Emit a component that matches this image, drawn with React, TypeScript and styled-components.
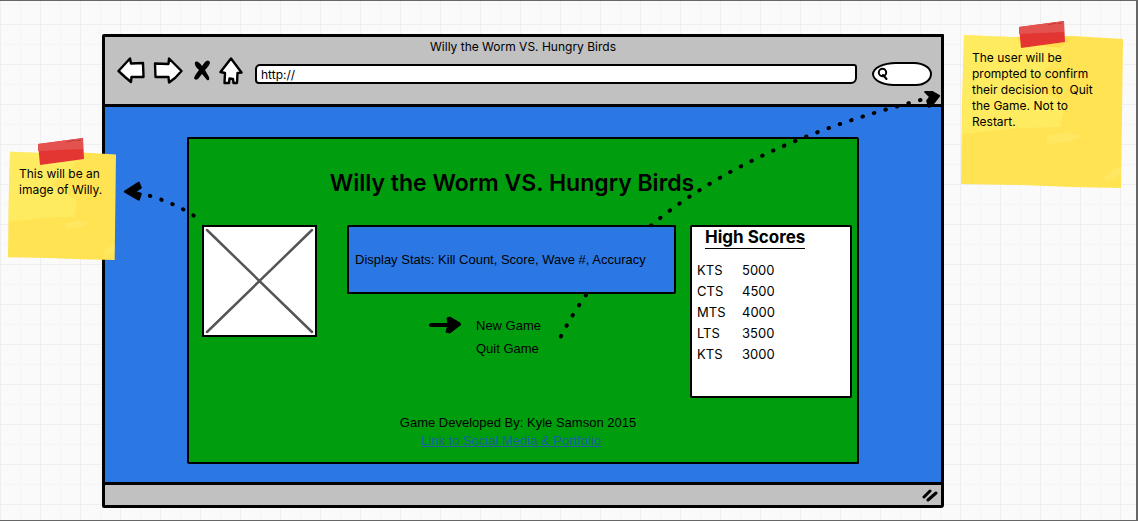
import React from "react";
import styled, { createGlobalStyle } from "styled-components";

const INK = "#000";
const BLUE = "#2b78e4";
const GREEN = "#009e0f";
const GREY = "#c1c1c1";

const GlobalStyle = createGlobalStyle`
  *, *::before, *::after { box-sizing: border-box; }
  body {
    margin: 0;
    color: ${INK};
    font-family: Inter, "Liberation Sans", sans-serif;
    font-size: 12px;
    line-height: 16px;
  }
  button, input { font: inherit; color: inherit; }
`;

const Canvas = styled.main`
  display: grid;
  grid-template-columns: 102px minmax(0, 1fr) 192px;
  align-items: start;
  min-height: 100vh;
  padding: 33px 0 12px;
  border: solid #666;
  border-width: 1px 2px 1px 0;
  background-color: #fafafa;
  background-image:
    linear-gradient(to right, #efefef 1px, transparent 1px),
    linear-gradient(to bottom, #efefef 1px, transparent 1px),
    linear-gradient(to right, #f5f5f5 1px, transparent 1px),
    linear-gradient(to bottom, #f5f5f5 1px, transparent 1px);
  background-size: 40px 40px, 40px 40px, 20px 20px, 20px 20px;
  background-position: 0 23px;
`;

const Note = styled.aside<{ $side: "left" | "right" }>`
  position: relative;
  z-index: 2;
  width: ${(p) => (p.$side === "left" ? 108 : 162)}px;
  min-height: ${(p) => (p.$side === "left" ? 109 : 154)}px;
  margin: ${(p) => (p.$side === "left" ? "117px 0 0 8px" : "0 0 0 17px")};
  padding: ${(p) => (p.$side === "left" ? "15px 0 0 11px" : "16px 12px 0 11px")};
`;

const NotePaper = styled.svg`
  position: absolute;
  inset: 0;
  z-index: -1;
  width: 100%;
  height: 100%;
`;

const NoteTape = styled.svg<{ $side: "left" | "right" }>`
  position: absolute;
  top: -13px;
  left: ${(p) => (p.$side === "left" ? 30 : 58)}px;
  width: 46px;
  height: 27px;
`;

const NoteText = styled.p`
  margin: 0;
  white-space: pre-line;
`;

const BrowserFrame = styled.section`
  position: relative;
  isolation: isolate;
  border: 3px solid ${INK};
  border-radius: 2px 1px 3px 2px;
`;

const Chrome = styled.header`
  padding-bottom: 18px;
  border-bottom: 3px solid ${INK};
  background: ${GREY};
`;

const TabTitle = styled.p`
  margin: 0;
  padding-top: 2px;
  text-align: center;
`;

const Toolbar = styled.div`
  display: flex;
  align-items: center;
  height: 31px;
  padding: 0 9px 0 12px;
`;

const ToolButtons = styled.div`
  display: flex;
  align-items: center;
  width: 138px;
  gap: 8px;
`;

const ToolButton = styled.button`
  display: flex;
  padding: 0;
  border: 0;
  background: none;
`;

const AddressBox = styled.input`
  flex: 1;
  min-width: 0;
  height: 20px;
  margin-top: 7px;
  padding: 0 4px;
  border: 2px solid ${INK};
  border-radius: 5px 3px 6px 4px;
  background: #fff;
`;

const SearchBox = styled.label`
  display: flex;
  align-items: center;
  width: 60px;
  height: 24px;
  margin: 6px 0 0 15px;
  padding-left: 3px;
  border: 2px solid ${INK};
  border-radius: 24px 18px 16px 22px / 12px;
  background: #fff;
`;

const SearchInput = styled.input`
  width: 32px;
  padding: 0;
  border: 0;
  background: none;
`;

const Viewport = styled.div`
  padding: 30px 82px 18px;
  background: ${BLUE};
`;

const GamePanel = styled.div`
  padding: 30px 5px 12px 13px;
  border: 2px solid ${INK};
  border-radius: 1px 2px 1px 2px;
  background: ${GREEN};
  font-family: "Liberation Sans", Arial, sans-serif;
  font-size: 13px;
`;

const GameTitle = styled.h1`
  margin: 0 0 28px;
  padding-right: 30px;
  text-align: center;
  font-family: Inter, "Liberation Sans", sans-serif;
  font-size: 23px;
  line-height: 28px;
  font-weight: 600;
`;

const Columns = styled.div`
  display: grid;
  grid-template-columns: 115px minmax(0, 1fr) 162px;
  align-items: start;
`;

const Picture = styled.svg`
  width: 115px;
  height: 112px;
  border: 2px solid ${INK};
  background: #fff;
`;

const Middle = styled.div`
  padding: 0 14px 0 30px;
`;

const StatsBox = styled.p`
  position: relative;
  z-index: 1;
  display: flex;
  align-items: center;
  height: 69px;
  margin: 0;
  padding-left: 6px;
  border: 2px solid ${INK};
  border-radius: 2px 1px 2px 1px;
  background: ${BLUE};
  white-space: nowrap;
`;

const Menu = styled.nav`
  display: flex;
  align-items: flex-start;
  gap: 15px;
  padding: 20px 0 0 82px;
`;

const MenuItems = styled.div`
  display: flex;
  flex-direction: column;
  align-items: flex-start;
`;

const MenuButton = styled.button`
  height: 23px;
  padding: 0;
  border: 0;
  background: none;
`;

const Scores = styled.section`
  min-height: 173px;
  padding: 0 5px;
  border: 2px solid ${INK};
  border-radius: 2px;
  background: #fff;
  font-family: Inter, "Liberation Sans", sans-serif;
`;

const ScoresTitle = styled.h2`
  width: fit-content;
  margin: 0 0 11px 8px;
  border-bottom: 1px solid ${INK};
  font-size: 17px;
  line-height: 21px;
  font-weight: 700;
`;

const ScoreTable = styled.table`
  border-collapse: collapse;
  font-size: 13px;
  line-height: 21px;
`;

const ScoreCell = styled.td`
  min-width: 45px;
  width: 45px;
  padding: 0;
`;

const Credits = styled.footer`
  padding: 16px 18px 0 0;
  text-align: center;
  line-height: 18px;
`;

const CreditLine = styled.p`
  margin: 0;
`;

const PortfolioLink = styled.a`
  margin-right: 14px;
  color: #1a5fa0;
`;

const StatusBar = styled.footer`
  display: flex;
  align-items: center;
  justify-content: flex-end;
  height: 23px;
  border-top: 3px solid ${INK};
  background: ${GREY};
`;

const Connectors = styled.svg`
  position: absolute;
  top: -3px;
  left: -3px;
  width: calc(100% + 6px);
  height: calc(100% + 6px);
  pointer-events: none;
`;

function StickyNote({ side, children }: { side: "left" | "right"; children: React.ReactNode }) {
  return (
    <Note $side={side}>
      <NotePaper viewBox="0 0 162 154" preserveAspectRatio="none" aria-hidden="true">
        <path d="M3 1L50 3L112 2L162 5L160 154L110 153L60 151L0 150L1 70Z" fill="#ffe352" />
        <path d="M3 1L50 3L108 4L94 28L66 48L104 70L99 93L60 94L1 100Z" fill="#fff06a" opacity=".6" />
        <path d="M86 102L105 98L122 102L108 108L86 110ZM142 144L151 136L160 132V140L147 148Z" fill="#ffed78" opacity=".4" />
        <path d="M54 3L112 4L99 14L62 9Z" fill="#ffdc4c" />
      </NotePaper>
      <NoteTape $side={side} viewBox="0 0 46 27" aria-hidden="true">
        <path d="M0 6L45 0L46 21L2 27Z" fill="#e33531" />
        <path d="M0 6L45 0L45 11L0 13Z" fill="#e45250" />
        <path d="M29 4l8-2M38 3l5-1" stroke="#b63e3c" />
      </NoteTape>
      <NoteText>{children}</NoteText>
    </Note>
  );
}

const outline = { fill: "#fff", stroke: INK, strokeWidth: 2.4, strokeLinejoin: "round" as const };

const scores: [string, string][] = [
  ["KTS", "5000"],
  ["CTS", "4500"],
  ["MTS", "4000"],
  ["LTS", "3500"],
  ["KTS", "3000"],
];

export default function App() {
  return (
    <>
      <GlobalStyle />
      <Canvas>
        <StickyNote side="left">{"This will be an\nimage of Willy."}</StickyNote>

        <BrowserFrame>
          <Chrome>
            <TabTitle>Willy the Worm VS. Hungry Birds</TabTitle>
            <Toolbar>
              <ToolButtons>
                <ToolButton aria-label="Back">
                  <svg width="28" height="27" viewBox="0 0 28 27">
                    <path {...outline} d="M1.5 14L13 1.500L14 6.500L26 6L26.500 20L14.500 20L14 25L8 20Z" />
                  </svg>
                </ToolButton>
                <ToolButton aria-label="Forward">
                  <svg width="30" height="27" viewBox="0 0 30 27">
                    <path {...outline} d="M28.500 14L16 1.500L15.500 7L2 6.500L2.500 20L15.500 20L16 25.500L22 21Z" />
                  </svg>
                </ToolButton>
                <ToolButton aria-label="Stop">
                  <svg width="20" height="24" viewBox="0 0 20 24">
                    <path d="M4 3Q3 7 8 11Q4 16 3 19Q4 22 7 20L11 15L16 21Q19 22 18 18L14 11Q19 6 19 3Q17 0 14 3L11 7Q7 1 4 3Z" fill={INK} />
                  </svg>
                </ToolButton>
                <ToolButton aria-label="Home">
                  <svg width="24" height="28" viewBox="0 0 24 28">
                    <path {...outline} d="M12 1.500L22.500 15.500L18.500 16L18 26H14.500L14 22L10.500 21.500L10 26H5.500L6 16L1.500 15Z" />
                  </svg>
                </ToolButton>
              </ToolButtons>
              <AddressBox aria-label="Address" defaultValue="http://" />
              <SearchBox>
                <svg width="13" height="13" viewBox="0 0 13 13" aria-hidden="true">
                  <circle cx="5.500" cy="5.500" r="3.700" fill="none" stroke={INK} strokeWidth="2" />
                  <path d="M6 8L9.500 12" stroke={INK} strokeWidth="2" strokeLinecap="round" />
                </svg>
                <SearchInput aria-label="Search" />
              </SearchBox>
            </Toolbar>
          </Chrome>

          <Viewport>
            <GamePanel>
              <GameTitle>Willy the Worm VS. Hungry Birds</GameTitle>
              <Columns>
                <Picture viewBox="0 0 111 108" role="img" aria-label="Willy">
                  <path d="M3 3L108 105M108 3L3 105" stroke="#555" strokeWidth="2.500" strokeLinecap="round" />
                </Picture>
                <Middle>
                  <StatsBox>Display Stats: Kill Count, Score, Wave #, Accuracy</StatsBox>
                  <Menu>
                    <svg width="32" height="20" viewBox="0 0 32 20" aria-hidden="true">
                      <path d="M2 11H22" stroke={INK} strokeWidth="4" strokeLinecap="round" />
                      <path d="M18 4L21 3L31 9Q33 11 30 12L21 19L17 18L19 11Z" fill={INK} stroke={INK} strokeLinejoin="round" />
                    </svg>
                    <MenuItems>
                      <MenuButton>New Game</MenuButton>
                      <MenuButton>Quit Game</MenuButton>
                    </MenuItems>
                  </Menu>
                </Middle>
                <Scores>
                  <ScoresTitle>High Scores</ScoresTitle>
                  <ScoreTable>
                    <tbody>
                      {scores.map(([name, score]) => (
                        <tr key={score}>
                          <ScoreCell>{name}</ScoreCell>
                          <ScoreCell>{score}</ScoreCell>
                        </tr>
                      ))}
                    </tbody>
                  </ScoreTable>
                </Scores>
              </Columns>
              <Credits>
                <CreditLine>Game Developed By: Kyle Samson 2015</CreditLine>
                <PortfolioLink href="#portfolio">Link to Social Media &amp; Portfolio</PortfolioLink>
              </Credits>
            </GamePanel>
          </Viewport>

          <StatusBar>
            <svg width="20" height="14" viewBox="0 0 20 14" aria-hidden="true">
              <path d="M3 9L9 3M7 12L15 5" stroke={INK} strokeWidth="3" strokeLinecap="round" />
            </svg>
          </StatusBar>

          <Connectors viewBox="0 0 842 475" aria-hidden="true">
            <g fill="none" stroke={INK} strokeWidth="4" strokeLinecap="round">
              <path d="M91 182Q70 168 36 159" strokeDasharray="0.500 11.500" />
              <path d="M459 303Q545 135 824 65" strokeDasharray="0.500 11.500" />
            </g>
            <path d="M22 158L36 149L38 154L32 158L38 160L36 166L34 165Z" fill={INK} stroke={INK} strokeWidth="2" strokeLinejoin="round" />
            <path d="M838 62L831 58L824 58L829 63L826 67L828 73L831 71Z" fill={INK} stroke={INK} strokeWidth="2" strokeLinejoin="round" />
          </Connectors>
        </BrowserFrame>

        <StickyNote side="right">{"The user will be\nprompted to confirm\ntheir decision to \u00a0Quit\nthe Game. Not to\nRestart."}</StickyNote>
      </Canvas>
    </>
  );
}
